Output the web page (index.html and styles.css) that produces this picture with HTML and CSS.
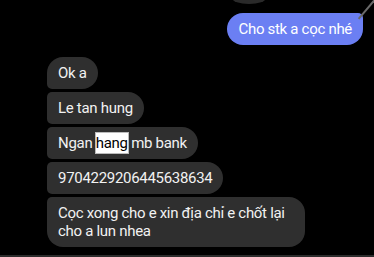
FILE: index.html
```html
<!DOCTYPE html>
<html lang="vi">
<head>
  <meta charset="UTF-8">
  <meta name="viewport" content="width=device-width, initial-scale=1.0">
  <title>Tin nhắn</title>
  <link rel="stylesheet" href="styles.css">
</head>
<body>
  <div class="chat">
    <div class="top-shadow"></div>
    <div class="top-stroke"></div>

    <div class="row out">
      <div class="bubble sent">Cho stk a cọc nhé</div>
    </div>

    <div class="group in">
      <div class="bubble recv first">Ok a</div>
      <div class="bubble recv">Le tan hung</div>
      <div class="bubble recv">Ngan <span class="mark">hang</span> mb bank</div>
      <div class="bubble recv">9704229206445638634</div>
      <div class="bubble recv last">Cọc xong cho e xin địa chỉ e chốt lại<br>cho a lun nhea</div>
    </div>
  </div>
  <div class="composer-line"></div>
</body>
</html>
```

FILE: styles.css
```css
body {
  margin: 0;
  background-color: #000;
  font-family: Roboto, 'Noto Sans', sans-serif;
  color: #f2f2f2;
  font-size: 15px;
  letter-spacing: -0.3px;
  height: 257px;
  overflow: hidden;
  display: flex;
  flex-direction: column;
}

.chat {
  position: relative;
  flex: 1;
  display: flex;
  flex-direction: column;
  padding-top: 13px;
  gap: 12px;
}

/* bits of the photo above, cut off at the top */
.top-shadow {
  position: absolute;
  top: -8px;
  left: 232px;
  width: 34px;
  height: 12px;
  border-radius: 50%;
  background-color: #2a2a2a;
}

.top-stroke {
  position: absolute;
  top: -4px;
  right: 6px;
  width: 2px;
  height: 26px;
  background-color: #6a6a6a;
  transform: rotate(40deg);
}

.row.out {
  display: flex;
  justify-content: flex-end;
  padding-right: 11px;
}

.group.in {
  display: flex;
  flex-direction: column;
  align-items: flex-start;
  gap: 3px;
  padding-left: 47px;
}

.bubble {
  padding: 7px 11px;
  line-height: 18px;
  border-radius: 16px;
}

.sent {
  background-color: #6b7ff3;
  color: #fff;
  border-top-right-radius: 5px;
}

.recv {
  background-color: #2f2f2f;
  border-top-left-radius: 5px;
  border-bottom-left-radius: 5px;
}

.recv.first {
  border-top-left-radius: 16px;
}

.recv.last {
  border-bottom-left-radius: 16px;
  padding-right: 20px;
}

.mark {
  background-color: #fff;
  color: #000;
  outline: 1px solid #bbb;
  padding: 1px 0;
}

.composer-line {
  height: 2px;
  background-color: #2c2c2c;
}
```
